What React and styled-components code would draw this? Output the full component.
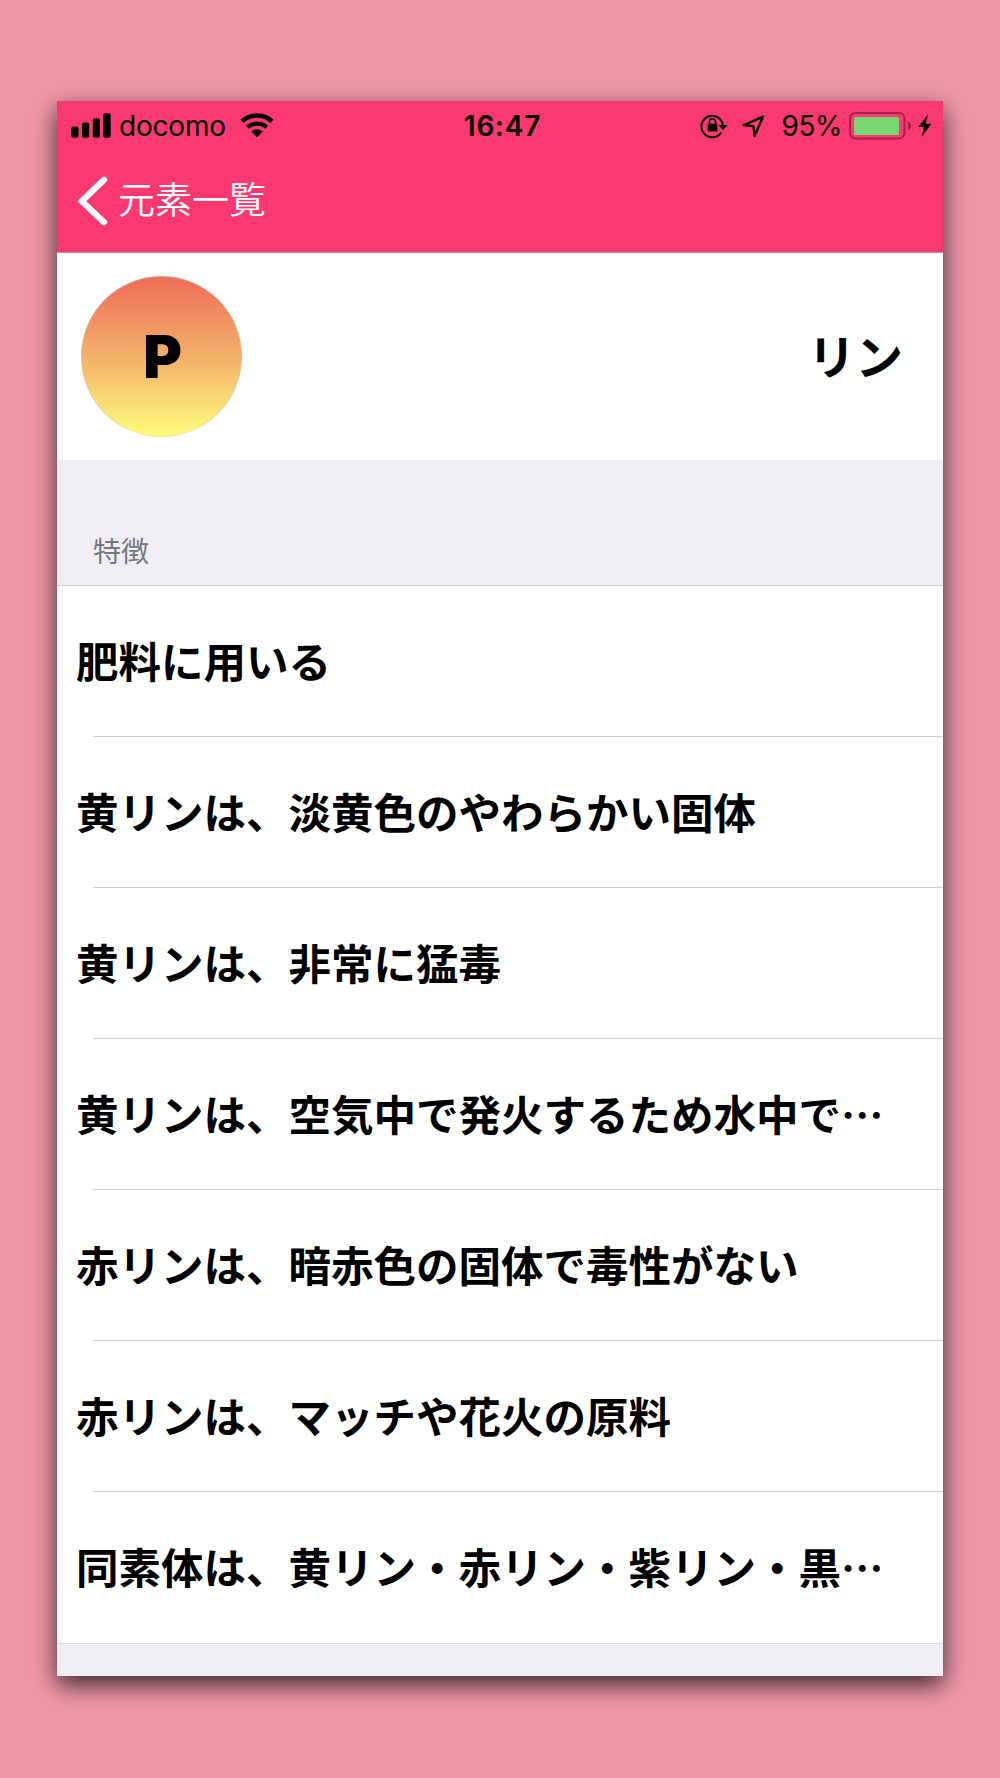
import styled, { createGlobalStyle } from 'styled-components';

const features = [
    '肥料に用いる',
    '黄リンは、淡黄色のやわらかい固体',
    '黄リンは、非常に猛毒',
    '黄リンは、空気中で発火するため水中で…',
    '赤リンは、暗赤色の固体で毒性がない',
    '赤リンは、マッチや花火の原料',
    '同素体は、黄リン・赤リン・紫リン・黒…',
];

const SignalIcon = () => (
    <svg width="40" height="25" viewBox="0 0 40 25">
        <rect x="0.3" y="13.5" width="7.2" height="11.2" rx="2" />
        <rect x="11" y="9.6" width="7.2" height="15.1" rx="2" />
        <rect x="21.8" y="5.2" width="7.2" height="19.5" rx="2" />
        <rect x="32.3" y="0.2" width="7.4" height="24.5" rx="2" />
    </svg>
);

const WifiIcon = () => (
    <svg width="34" height="25" viewBox="0 0 34 25">
        <path d="M2 8.2C10.5 0.6 23.5 0.6 32 8.2" fill="none" stroke="#000" strokeWidth="4.6" />
        <path d="M7.3 14.2C12.8 9.3 21.2 9.3 26.7 14.2" fill="none" stroke="#000" strokeWidth="4.2" />
        <path d="M11.3 18.4C14.6 15.6 19.4 15.6 22.7 18.4L17 24.2Z" />
    </svg>
);

const LockIcon = () => (
    <svg width="28" height="26" viewBox="0 0 28 26">
        <path d="M21.4 19.2A10.8 10.8 0 1 1 22.9 12" fill="none" stroke="#000" strokeWidth="2" />
        <path d="M18.6 12H27.6L23.1 17.2Z" />
        <rect x="7.6" y="10.8" width="9.8" height="7.8" rx="1" />
        <path d="M9.5 11.4V8.8A3 3 0 0 1 15.5 8.8V11.4" fill="none" stroke="#000" strokeWidth="1.6" />
    </svg>
);

const LocationIcon = () => (
    <svg width="23" height="24" viewBox="0 0 23 24">
        <path d="M1.6 11.2L21 2.6L12.6 22L11.4 12.2Z" fill="none" stroke="#000" strokeWidth="2.3" strokeLinejoin="round" />
    </svg>
);

const BatteryIcon = () => (
    <svg width="63" height="28" viewBox="0 0 63 28">
        <rect x="1" y="1" width="54.5" height="25.5" rx="5.5" fill="none" stroke="#a3224a" strokeWidth="2" />
        <rect x="5" y="5" width="45" height="18" rx="1.5" fill="#77d572" />
        <path d="M59 9C63 10.5 63 17 59 18.5Z" fill="#a3224a" />
    </svg>
);

const BoltIcon = () => (
    <svg width="14" height="24" viewBox="0 0 14 24">
        <path d="M9.8 0.5L0.5 13H6L3.6 23L13.5 9.8H7.8Z" />
    </svg>
);

const BackIcon = () => (
    <svg width="30" height="50" viewBox="0 0 30 50">
        <path d="M26 3.8L3.8 25.2L26 46.2" fill="none" stroke="#fff" strokeWidth="6.2" strokeLinecap="round" />
    </svg>
);

const App = () => {
    return (
        <>
            <GlobalStyle />
            <Page>
                <Phone>
                    <Header>
                        <StatusBar>
                            <StatusGroup>
                                <SignalIcon />
                                <Carrier>docomo</Carrier>
                                <WifiIcon />
                            </StatusGroup>
                            <Clock>16:47</Clock>
                            <StatusGroup $end>
                                <SmallIcons>
                                    <LockIcon />
                                    <LocationIcon />
                                </SmallIcons>
                                <Percent>95%</Percent>
                                <Battery>
                                    <BatteryIcon />
                                    <BoltIcon />
                                </Battery>
                            </StatusGroup>
                        </StatusBar>
                        <BackButton>
                            <BackIcon />
                            <BackLabel>元素一覧</BackLabel>
                        </BackButton>
                    </Header>
                    <Element>
                        <Symbol>P</Symbol>
                        <ElementName>リン</ElementName>
                    </Element>
                    <SectionTitle>特徴</SectionTitle>
                    <List>
                        {features.map((feature) => <Item key={feature}>{feature}</Item>)}
                    </List>
                </Phone>
            </Page>
        </>
    );
};

const GlobalStyle = createGlobalStyle`
body {
    margin: 0;
    background-color: #ef97a8;
}
* {
    box-sizing: border-box;
}
svg {
    display: block;
    flex-shrink: 0;
}
`;

const Page = styled.div`
height: 1778px;
padding: 101px 57px 0;
background-color: #ef97a8;
`;

const Phone = styled.div`
display: flex;
flex-direction: column;
height: 1575px;
background-color: #efeef4;
box-shadow: 0 9px 23px rgba(0, 0, 0, 0.74);
font-family: "Noto Sans CJK JP", sans-serif;
color: #000;
`;

const Header = styled.div`
height: 152px;
background-color: #fc3870;
border-bottom: 1px solid #c78a9c;
`;

const StatusBar = styled.div`
display: grid;
grid-template-columns: 1fr auto 1fr;
align-items: center;
height: 49px;
padding: 0 11px 0 14px;
font-family: Inter, sans-serif;
`;

const StatusGroup = styled.div`
display: flex;
align-items: center;
justify-content: ${(props) => (props.$end ? 'flex-end' : 'flex-start')};
`;

const Carrier = styled.span`
margin: 0 14px 0 8px;
font-size: 28px;
letter-spacing: -0.2px;
`;

const Clock = styled.span`
padding-left: 2px;
font-size: 28px;
font-weight: 600;
letter-spacing: 0.8px;
`;

const SmallIcons = styled.div`
display: flex;
align-items: center;
gap: 14px;
`;

const Percent = styled.span`
margin: 0 7px 0 17px;
font-size: 28px;
letter-spacing: -0.5px;
`;

const Battery = styled.div`
display: flex;
align-items: center;
gap: 6px;
`;

const BackButton = styled.div`
display: flex;
align-items: center;
gap: 10px;
height: 101px;
padding-left: 21px;
color: #fff;
`;

const BackLabel = styled.span`
padding-bottom: 4px;
font-size: 37px;
font-weight: 350;
line-height: 1;
`;

const Element = styled.div`
display: flex;
align-items: center;
justify-content: space-between;
height: 207px;
padding: 0 40px 0 24px;
background-color: #fff;
`;

const Symbol = styled.div`
display: flex;
align-items: center;
justify-content: center;
width: 161px;
height: 161px;
padding-left: 2px;
border: 1px solid rgba(200, 200, 190, 0.4);
border-radius: 50%;
background: linear-gradient(#ee6c59, #f2ad68 48%, #fffd7c) border-box;
font-family: Inter, sans-serif;
font-size: 59px;
font-weight: 900;
`;

const ElementName = styled.div`
padding-bottom: 5px;
font-size: 47.5px;
font-weight: 700;
`;

const SectionTitle = styled.div`
display: flex;
align-items: flex-end;
height: 125px;
padding: 0 0 14px 36px;
font-size: 28px;
line-height: 41px;
color: #78777c;
`;

const List = styled.div`
height: 1059px;
display: flex;
flex-direction: column;
background-color: #fff;
border-top: 1.5px solid #d0cfd5;
border-bottom: 1.5px solid #d9d8dd;
`;

const Item = styled.div`
display: flex;
flex: 1;
align-items: center;
padding: 0 0 4px 19px;
font-size: 42.5px;
font-weight: 700;
white-space: nowrap;
background: linear-gradient(#cfced3, #cfced3) 36px 100% / 100% 1px no-repeat;

&:last-child {
    background: none;
}
`;

export default App;
